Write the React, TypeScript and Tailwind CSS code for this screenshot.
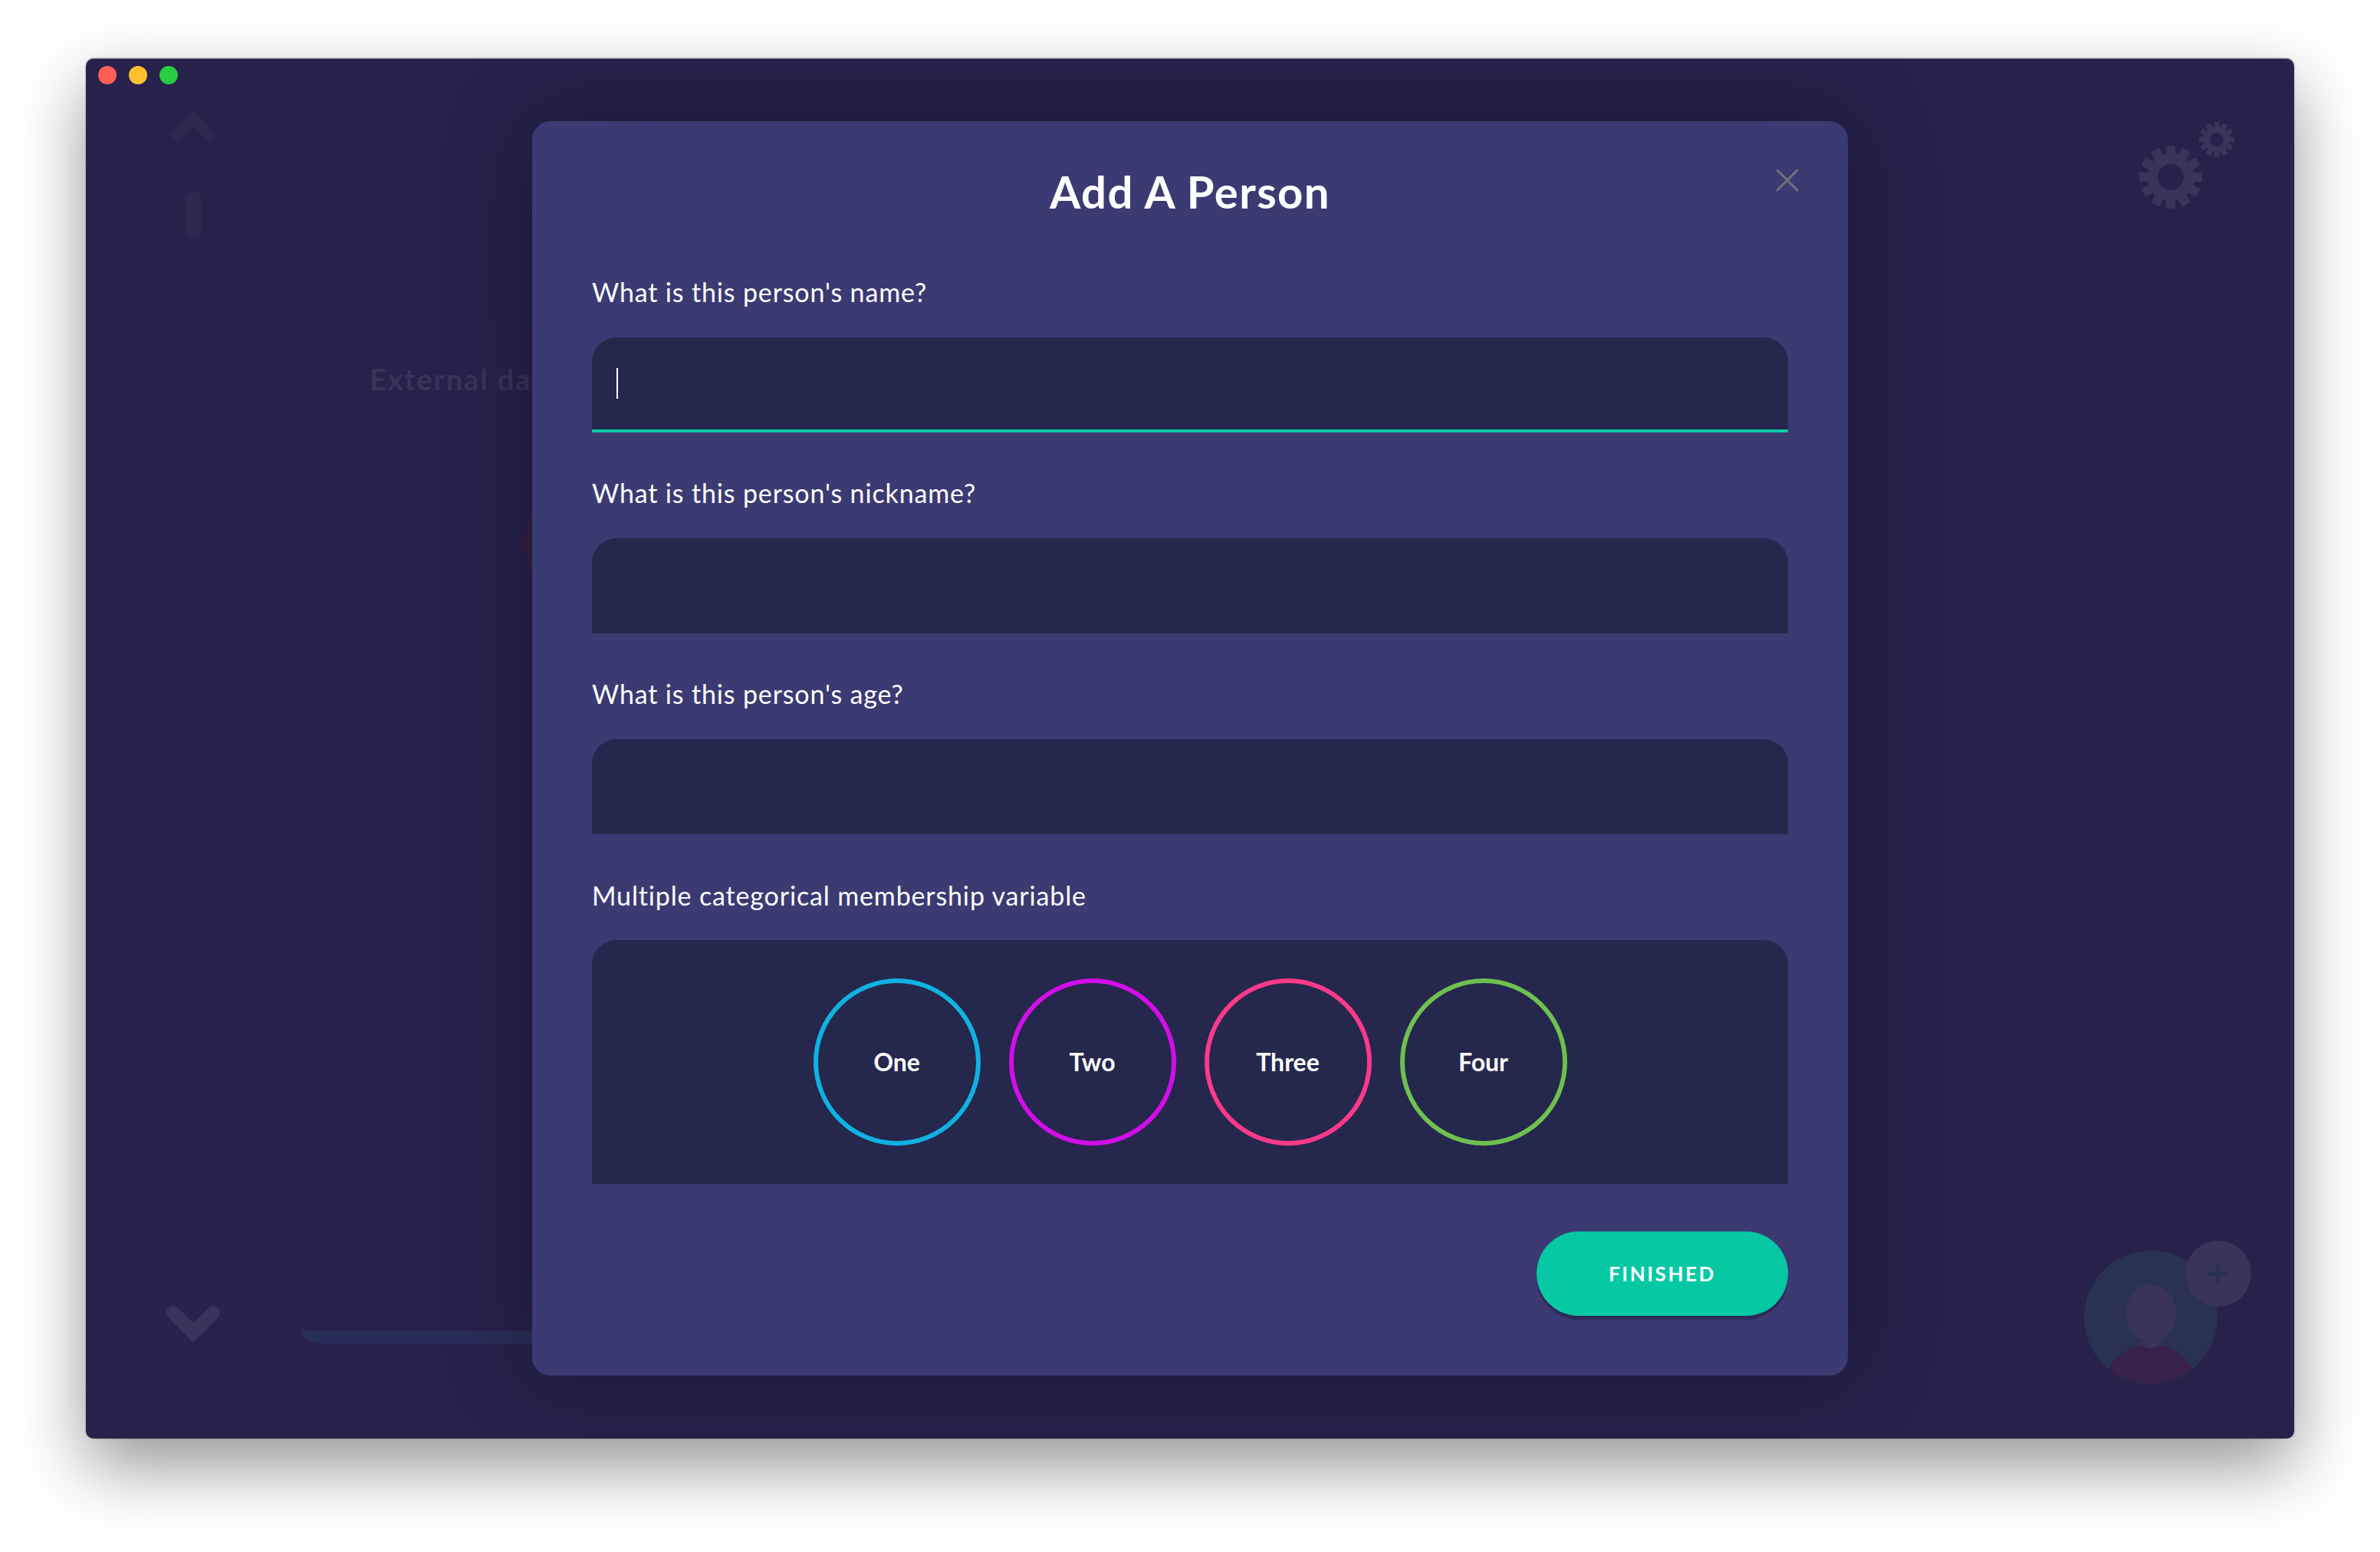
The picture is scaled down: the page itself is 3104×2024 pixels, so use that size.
import { useState } from "react";

const gearTeeth = Array.from({ length: 12 }, (_, i) => i * 30);

function Gear({ cx, cy, outer, body, hole, tooth }: { cx: number; cy: number; outer: number; body: number; hole: number; tooth: number }) {
  const ring = (body + hole) / 2;
  return (
    <g>
      <circle cx={cx} cy={cy} r={ring} fill="none" stroke="#3a335b" strokeWidth={body - hole} />
      {gearTeeth.map((angle) => (
        <rect
          key={angle}
          x={cx - tooth / 2}
          y={cy - outer}
          width={tooth}
          height={outer - body + 4}
          fill="#3a335b"
          transform={`rotate(${angle} ${cx} ${cy})`}
        />
      ))}
    </g>
  );
}

function SettingsIcon() {
  return (
    <svg width="124" height="114" viewBox="0 0 124 114" aria-hidden="true">
      <Gear cx={41} cy={72} outer={41} body={31} hole={17} tooth={12} />
      <Gear cx={101} cy={23} outer={23} body={17} hole={9} tooth={7} />
    </svg>
  );
}

function AddPersonIcon() {
  return (
    <svg width="220" height="188" viewBox="0 0 220 188" aria-hidden="true">
      <defs>
        <clipPath id="avatar">
          <circle cx="87" cy="100" r="87" />
        </clipPath>
      </defs>
      <circle cx="87" cy="100" r="87" fill="#293254" />
      <g clipPath="url(#avatar)">
        <path
          d="M24 190 C30 158 56 138 74 136 Q87 140 100 136 C118 138 144 158 150 190 Z"
          fill="#392249"
        />
        <path d="M73 134 Q77 132 78 128 H96 Q97 132 101 134 Q95 140 87 140 Q79 140 73 134 Z" fill="#3a335b" />
        <ellipse cx="87" cy="94" rx="33" ry="37" fill="#3a335b" />
      </g>
      <circle cx="175" cy="43" r="43" fill="#3a335b" />
      <path d="M161 43 H189 M175 29 V57" stroke="#293254" strokeWidth="6" />
    </svg>
  );
}

function TextField({ id, label, focused }: { id: string; label: string; focused?: boolean }) {
  const [value, setValue] = useState("");
  return (
    <div className="flex flex-col gap-[39px]">
      <label htmlFor={id} className="text-[34px] leading-10 tracking-wide">
        {label}
      </label>
      <div className="relative">
        <input
          id={id}
          type="text"
          value={value}
          onChange={(event) => setValue(event.target.value)}
          className={
            focused
              ? "block h-[124px] w-full rounded-t-[32px] border-b-4 border-[#06c9a4] bg-[#25274d] px-8 text-[32px] outline-none"
              : "block h-[124px] w-full rounded-t-[32px] bg-[#25274d] px-8 text-[32px] outline-none"
          }
        />
        {focused && value === "" && <span className="absolute top-10 left-8 h-10 w-0.5 bg-white" />}
      </div>
    </div>
  );
}

const options = [
  { label: "One", ring: "border-[#0fb2e2]" },
  { label: "Two", ring: "border-[#d30ee8]" },
  { label: "Three", ring: "border-[#fd3a88]" },
  { label: "Four", ring: "border-[#6fc04f]" },
];

function Dialog() {
  return (
    <form
      role="dialog"
      aria-labelledby="dialog-title"
      onSubmit={(event) => event.preventDefault()}
      className="relative w-full max-w-[1716px] rounded-3xl bg-[#3b3a73] px-[78px] pt-[58px] pb-[78px] text-white shadow-[0_0_120px_rgba(0,0,0,0.32)]"
    >
      <h2 id="dialog-title" className="text-center text-[58px] leading-[68px] font-bold tracking-wide">
        Add A Person
      </h2>
      <button type="button" aria-label="Close" className="absolute top-[62px] right-16">
        <svg width="30" height="30" viewBox="0 0 30 30" fill="none" stroke="#72727a" strokeWidth="3" strokeLinecap="round" aria-hidden="true">
          <path d="M2 2 L28 28 M28 2 L2 28" />
        </svg>
      </button>
      <div className="mt-[77px] flex flex-col gap-[59px]">
        <TextField id="name" label="What is this person's name?" focused />
        <TextField id="nickname" label="What is this person's nickname?" />
        <TextField id="age" label="What is this person's age?" />
      </div>
      <div role="group" aria-labelledby="membership" className="mt-[60px] flex flex-col gap-[38px]">
        <p id="membership" className="text-[34px] leading-10 tracking-wide">
          Multiple categorical membership variable
        </p>
        <div className="flex flex-wrap justify-center gap-[37px] rounded-t-[32px] bg-[#25274d] py-[50px]">
          {options.map((option) => (
            <label
              key={option.label}
              className={`relative flex size-[218px] items-center justify-center rounded-full border-[6px] text-[32px] leading-10 font-bold ${option.ring}`}
            >
              <input type="checkbox" className="sr-only" />
              {option.label}
            </label>
          ))}
        </div>
      </div>
      <div className="mt-[62px] flex justify-end">
        <button
          type="submit"
          className="h-[110px] w-[328px] rounded-full bg-[#06c9a4] text-[26px] font-bold tracking-widest text-white uppercase shadow-[0_5px_0_#2d2a58]"
        >
          Finished
        </button>
      </div>
    </form>
  );
}

export default function App() {
  return (
    <div className="flex min-h-screen bg-white px-28 pt-[76px] pb-[148px] font-[Lato,sans-serif]">
      <div className="relative flex flex-1 flex-col rounded-[10px] bg-[#27214c] shadow-[inset_0_1px_0_rgba(255,255,255,0.35),0_0_2px_rgba(0,0,0,0.5),0_36px_90px_rgba(0,0,0,0.42)]">
        <header className="flex h-11 items-center gap-4 px-4">
          <span className="size-6 rounded-full bg-[#ff5f57]" />
          <span className="size-6 rounded-full bg-[#ffc02f]" />
          <span className="size-6 rounded-full bg-[#28cd41]" />
        </header>
        <div className="flex flex-1">
          <nav className="flex w-[280px] flex-col items-center pt-6 pb-[58px]">
            <button type="button" aria-label="Previous">
              <svg className="block" width="56" height="40" viewBox="0 0 56 40" fill="none" aria-hidden="true">
                <path d="M7 32 L28 11 L49 32" stroke="#2e2850" strokeWidth="14" strokeLinecap="round" />
              </svg>
            </button>
            <div className="mt-[66px] mb-[57px] w-[22px] flex-1 rounded-full bg-[#282251]">
              <div className="h-[60px] rounded-full bg-[#2e2850]" />
            </div>
            <button type="button" aria-label="Next" className="flex size-[186px] items-center justify-center rounded-full bg-[#282250]">
              <svg width="70" height="52" viewBox="0 0 70 52" fill="none" aria-hidden="true">
                <path d="M9 13 L35 39 L61 13" stroke="#3a335b" strokeWidth="18" strokeLinecap="round" />
              </svg>
            </button>
          </nav>
          <section className="mt-[304px] mb-[124px] w-1/2 rounded-[22px] border-b-16 border-[#282e5a] bg-[#28214c] pt-[47px] pl-[90px]">
            <h3 className="text-[38px] leading-[46px] font-bold tracking-wider text-[#3a335b]">External data</h3>
            <div className="mt-[107px] ml-[202px] size-[170px] rounded-full bg-[#351f46]" />
          </section>
          <aside className="ml-auto flex flex-col items-end justify-between pt-[39px] pb-[70px]">
            <button type="button" aria-label="Settings" className="mr-[78px]">
              <SettingsIcon />
            </button>
            <button type="button" aria-label="Add a person" className="mr-[54px]">
              <AddPersonIcon />
            </button>
          </aside>
        </div>
        <div className="absolute inset-0 flex items-center justify-center overflow-hidden rounded-[10px]">
          <Dialog />
        </div>
      </div>
    </div>
  );
}
